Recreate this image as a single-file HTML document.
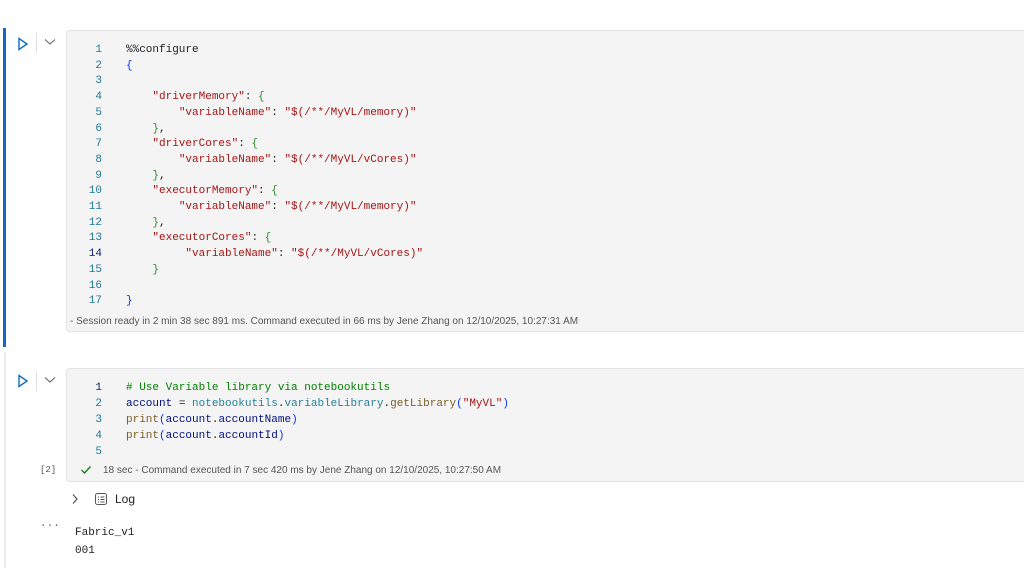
<!DOCTYPE html>
<html><head><style>
body{margin:0;width:1024px;height:568px;background:#fff;position:relative;overflow:hidden;font-family:"Liberation Sans",sans-serif}
.abs{position:absolute}
.box{position:absolute;left:66px;right:-4px;background:#f4f4f4;border:1px solid #e3e3e3;border-radius:4px}
.code{position:absolute;font-family:"Liberation Mono",monospace;font-size:11px;white-space:pre;color:#1f1f1f}
.ln{position:absolute;width:36px;text-align:right;font-family:"Liberation Mono",monospace;font-size:11px;color:#237893;white-space:pre}
.s{color:#a31515}.g{color:#2e8b2e}.b{color:#0431fa}.c{color:#008000}.v{color:#001080}.t{color:#267f99}.f{color:#795e26}
.foot{position:absolute;font-size:10px;color:#555;white-space:nowrap}
</style></head><body>
<div class="abs" style="left:3px;top:28px;width:3px;height:319px;background:#0f6cbd"></div>
<div class="abs" style="left:4px;top:352px;width:2px;height:216px;background:#ececec"></div>

<svg class="abs" style="left:17px;top:37px" width="12" height="14"><path d="M2 1.5 L10 7 L2 12.5 Z" fill="none" stroke="#0f6cbd" stroke-width="1.4"/></svg>
<div class="abs" style="left:36px;top:33px;width:1px;height:20px;background:#e0e0e0"></div>
<svg class="abs" style="left:44px;top:38px" width="12" height="8"><path d="M1 1.5 L6 6 L11 1.5" fill="none" stroke="#666" stroke-width="1.1"/></svg>

<div class="box" style="top:30px;height:300px"></div>
<div class="ln" style="left:66px;top:43px;line-height:15.7px">1
2
3
4
5
6
7
8
9
10
11
12
13
<span style="color:#0b216f">14</span>
15
16
17</div>
<div class="code" style="left:126px;top:43px;line-height:15.7px">%%configure
<span class="b">{</span>

    <span class="s">"driverMemory"</span>: <span class="g">{</span>
        <span class="s">"variableName"</span>: <span class="s">"$(/**/MyVL/memory)"</span>
    <span class="g">}</span>,
    <span class="s">"driverCores"</span>: <span class="g">{</span>
        <span class="s">"variableName"</span>: <span class="s">"$(/**/MyVL/vCores)"</span>
    <span class="g">}</span>,
    <span class="s">"executorMemory"</span>: <span class="g">{</span>
        <span class="s">"variableName"</span>: <span class="s">"$(/**/MyVL/memory)"</span>
    <span class="g">}</span>,
    <span class="s">"executorCores"</span>: <span class="g">{</span>
         <span class="s">"variableName"</span>: <span class="s">"$(/**/MyVL/vCores)"</span>
    <span class="g">}</span>

<span class="b">}</span></div>
<div class="foot" style="left:70px;top:316px">- Session ready in 2 min 38 sec 891 ms. Command executed in 66 ms by Jene Zhang on 12/10/2025, 10:27:31 AM</div>

<svg class="abs" style="left:17px;top:374px" width="12" height="14"><path d="M2 1.5 L10 7 L2 12.5 Z" fill="none" stroke="#0f6cbd" stroke-width="1.4"/></svg>
<div class="abs" style="left:36px;top:371px;width:1px;height:20px;background:#e0e0e0"></div>
<svg class="abs" style="left:44px;top:376px" width="12" height="8"><path d="M1 1.5 L6 6 L11 1.5" fill="none" stroke="#666" stroke-width="1.1"/></svg>

<div class="box" style="top:368px;height:112px"></div>
<div class="ln" style="left:66px;top:380px;line-height:16px"><span style="color:#0b216f">1</span>
2
3
4
5</div>
<div class="code" style="left:126px;top:380px;line-height:16px"><span class="c"># Use Variable library via notebookutils</span>
<span class="v">account</span> = <span class="t">notebookutils</span>.<span class="t">variableLibrary</span>.<span class="f">getLibrary</span><span class="b">(</span><span class="s">"MyVL"</span><span class="b">)</span>
<span class="f">print</span><span class="b">(</span><span class="v">account</span>.<span class="v">accountName</span><span class="b">)</span>
<span class="f">print</span><span class="b">(</span><span class="v">account</span>.<span class="v">accountId</span><span class="b">)</span>
</div>
<div class="code" style="left:40px;top:465px;font-size:9px;color:#555">[2]</div>
<svg class="abs" style="left:80px;top:465px" width="12" height="10"><path d="M1.5 5 L4.5 8 L10.5 1.5" fill="none" stroke="#107c10" stroke-width="1.3"/></svg>
<div class="foot" style="left:103px;top:465px">18 sec - Command executed in 7 sec 420 ms by Jene Zhang on 12/10/2025, 10:27:50 AM</div>

<svg class="abs" style="left:71px;top:493px" width="8" height="12"><path d="M2 1.5 L6 6 L2 10.5" fill="none" stroke="#444" stroke-width="1.1"/></svg>
<svg class="abs" style="left:94px;top:492px" width="14" height="14"><rect x="1.5" y="1.5" width="11" height="11" rx="2" fill="none" stroke="#555" stroke-width="1"/><path d="M4 5h1M6.5 5h4M4 7.5h1M6.5 7.5h4M4 10h1M6.5 10h4" stroke="#555" stroke-width="0.9"/></svg>
<div class="abs" style="left:115px;top:492px;font-size:12px;color:#222">Log</div>

<div class="code" style="left:40px;top:518px;color:#666">...</div>
<div class="code" style="left:75px;top:524px;line-height:18px">Fabric_v1
001</div>
</body></html>
